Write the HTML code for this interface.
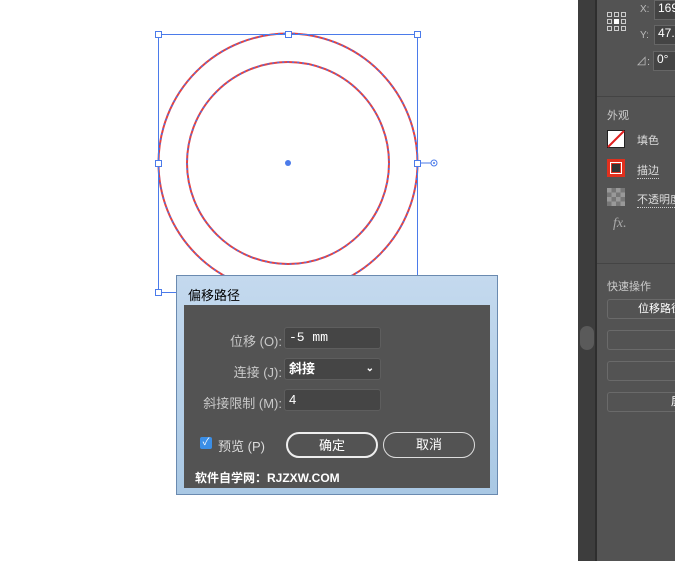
<!DOCTYPE html><html><head><style>
body{margin:0;width:675px;height:561px;background:#fff;position:relative;overflow:hidden;font-family:"Liberation Sans","Noto Sans CJK SC",sans-serif}
.a{position:absolute}
.lbl{color:#c8c8c8;font-size:13px;text-align:right;width:110px;left:172px}
.inp{background:#454545;border:1px solid #5e5e5e;border-radius:3px;left:284px;width:97px;height:22px;color:#fff;font-size:13px;line-height:20px;padding-left:4px;box-sizing:border-box}
.btn{border:2px solid #eee;border-radius:13px;height:26px;color:#fff;font-size:13px;text-align:center;line-height:23px;box-sizing:border-box;top:432px}
.pb{border:1px solid #6a6a6a;border-radius:3px;left:607px;width:80px;height:20px;box-sizing:border-box}
.pt{color:#ddd;font-size:11px}
</style></head><body>
<svg class="a" style="left:0;top:0" width="578" height="561">
<circle cx="288" cy="163" r="129.5" fill="none" stroke="#e8413c" stroke-width="2"/>
<circle cx="288" cy="163" r="129.5" fill="none" stroke="#4b70e8" stroke-width="1.5" stroke-dasharray="2 3"/>
<circle cx="288" cy="163" r="101" fill="none" stroke="#e8413c" stroke-width="2"/>
<circle cx="288" cy="163" r="101" fill="none" stroke="#4b70e8" stroke-width="1.5" stroke-dasharray="2 3"/>
<rect x="158.5" y="34.5" width="259" height="258" fill="none" stroke="#4b7bea" stroke-width="1"/>
<g fill="#fff" stroke="#4b7bea"><rect x="155.5" y="31.5" width="6" height="6"/><rect x="285.5" y="31.5" width="6" height="6"/><rect x="414.5" y="31.5" width="6" height="6"/><rect x="155.5" y="160.5" width="6" height="6"/><rect x="414.5" y="160.5" width="6" height="6"/><rect x="155.5" y="289.5" width="6" height="6"/></g>
<line x1="420" y1="163" x2="431" y2="163" stroke="#4b7bea"/><circle cx="434" cy="163" r="3" fill="#fff" stroke="#4b7bea"/><circle cx="434" cy="163" r="1" fill="#4b7bea"/>
<circle cx="288" cy="163" r="3" fill="#4b7bea"/>
</svg>
<div class="a" style="left:578px;top:0;width:18px;height:561px;background:#3d3d3d"></div>
<div class="a" style="left:580px;top:326px;width:14px;height:24px;background:#5a5a5a;border-radius:7px"></div>
<div class="a" style="left:595px;top:0;width:2px;height:561px;background:#2e2e2e"></div>
<div class="a" style="left:597px;top:0;width:78px;height:561px;background:#535353"></div>
<div class="a" style="left:597px;top:96px;width:78px;height:1px;background:#444"></div>
<div class="a" style="left:597px;top:263px;width:78px;height:1px;background:#444"></div>
<svg class="a" style="left:607px;top:12px" width="20" height="20"><g fill="none" stroke="#ccc"><rect x="0.5" y="0.5" width="4" height="4"/><rect x="7.5" y="0.5" width="4" height="4"/><rect x="14.5" y="0.5" width="4" height="4"/><rect x="0.5" y="7.5" width="4" height="4"/><rect x="14.5" y="7.5" width="4" height="4"/><rect x="0.5" y="14.5" width="4" height="4"/><rect x="7.5" y="14.5" width="4" height="4"/><rect x="14.5" y="14.5" width="4" height="4"/></g><rect x="7" y="7" width="5" height="5" fill="#fff"/></svg>
<div class="a pt" style="left:640px;top:4px;font-size:10px;color:#bbb">X:</div>
<div class="a" style="left:654px;top:0;width:30px;height:18px;background:#444;border:1px solid #666;color:#fff;font-size:12px;padding-left:3px">169</div>
<div class="a pt" style="left:640px;top:30px;font-size:10px;color:#bbb">Y:</div>
<div class="a" style="left:654px;top:25px;width:30px;height:18px;background:#444;border:1px solid #666;color:#fff;font-size:12px;padding-left:3px">47.</div>
<div class="a pt" style="left:636px;top:53px;color:#bbb">⊿:</div>
<div class="a" style="left:653px;top:51px;width:30px;height:18px;background:#444;border:1px solid #666;color:#fff;font-size:12px;padding-left:3px">0°</div>
<div class="a pt" style="left:607px;top:107px;color:#ccc">外观</div>
<svg class="a" style="left:607px;top:130px" width="18" height="18"><rect x="0.5" y="0.5" width="17" height="17" fill="#fff" stroke="#222"/><line x1="1" y1="17" x2="17" y2="1" stroke="#e02020" stroke-width="2"/></svg>
<div class="a pt" style="left:637px;top:132px">填色</div>
<svg class="a" style="left:607px;top:159px" width="18" height="18"><rect x="0" y="0" width="18" height="18" fill="#e0301e"/><rect x="3.5" y="3.5" width="11" height="11" fill="none" stroke="#fff"/><rect x="5" y="5" width="8" height="8" fill="#333"/></svg>
<div class="a pt" style="left:637px;top:162px;border-bottom:1px dotted #ccc">描边</div>
<svg class="a" style="left:607px;top:188px" width="18" height="18"><rect width="18" height="18" fill="#777"/><g fill="#999"><rect x="0" y="0" width="4.5" height="4.5"/><rect x="9" y="0" width="4.5" height="4.5"/><rect x="4.5" y="4.5" width="4.5" height="4.5"/><rect x="13.5" y="4.5" width="4.5" height="4.5"/><rect x="0" y="9" width="4.5" height="4.5"/><rect x="9" y="9" width="4.5" height="4.5"/><rect x="4.5" y="13.5" width="4.5" height="4.5"/><rect x="13.5" y="13.5" width="4.5" height="4.5"/></g></svg>
<div class="a pt" style="left:637px;top:191px;border-bottom:1px dotted #ccc;white-space:nowrap">不透明度</div>
<div class="a" style="left:613px;top:216px;color:#aaa;font-style:italic;font-size:14px;font-family:'Liberation Serif',serif">fx.</div>
<div class="a pt" style="left:607px;top:278px;color:#ccc">快速操作</div>
<div class="a pb" style="top:299px;color:#fff;font-size:11px;padding-left:30px;line-height:18px;white-space:nowrap">位移路径</div>
<div class="a pb" style="top:330px"></div>
<div class="a pb" style="top:361px"></div>
<div class="a pb" style="top:392px;color:#fff;font-size:11px;padding-left:63px;line-height:18px">屏</div>
<div class="a" style="left:176px;top:275px;width:322px;height:220px;background:linear-gradient(#c4d9ee,#a9c8e4);border:1px solid #6a8ab0;box-sizing:border-box"></div>
<div class="a" style="left:188px;top:285px;font-size:13px;color:#000">偏移路径</div>
<div class="a" style="left:184px;top:305px;width:306px;height:183px;background:#535353"></div>
<div class="a lbl" style="top:331px">位移 (O):</div>
<div class="a inp" style="top:327px;font-family:'Liberation Mono',monospace">-5 mm</div>
<div class="a lbl" style="top:362px">连接 (J):</div>
<div class="a inp" style="top:358px;font-weight:bold">斜接<span style="position:absolute;right:6px;font-size:10px">⌄</span></div>
<div class="a lbl" style="top:393px">斜接限制 (M):</div>
<div class="a inp" style="top:389px">4</div>
<div class="a" style="left:200px;top:437px;width:12px;height:12px;background:#3b8ee6;border-radius:2px;color:#fff;font-size:10px;line-height:12px;text-align:center">✓</div>
<div class="a" style="left:218px;top:436px;color:#ddd;font-size:13px">预览 (P)</div>
<div class="a btn" style="left:286px;width:92px">确定</div>
<div class="a btn" style="left:383px;width:92px;border-color:#ddd;border-width:1.5px">取消</div>
<div class="a" style="left:195px;top:469px;color:#fff;font-size:12px;font-weight:bold">软件自学网：RJZXW.COM</div>
</body></html>
